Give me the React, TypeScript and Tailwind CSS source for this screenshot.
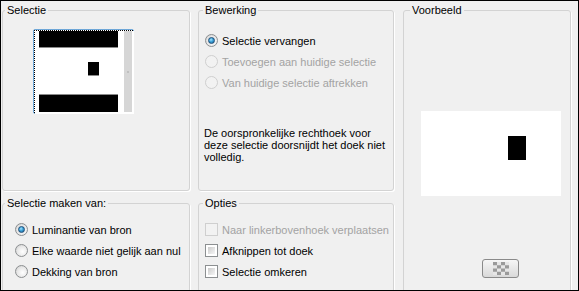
import React from 'react';

const font = "font-['Liberation_Sans',Arial,sans-serif] text-[11px] leading-[12px]";

function Radio({ checked, disabled }: { checked?: boolean; disabled?: boolean }) {
  return (
    <span
      className={
        'relative flex h-[13px] w-[13px] shrink-0 items-center justify-center rounded-full border ' +
        (disabled
          ? 'border-[#cfcfcf] bg-[#f2f2f2]'
          : 'border-[#8c8f91] bg-[radial-gradient(circle_at_60%_60%,#ffffff_0%,#e8e8e8_55%,#c4c4c4_100%)]')
      }
    >
      {checked && (
        <span className="h-[7px] w-[7px] rounded-full border border-[#1f4e78] bg-[radial-gradient(circle_at_40%_35%,#a6e3ff_0%,#3aa1d8_45%,#1b5d8f_100%)]" />
      )}
    </span>
  );
}

function Check({ disabled }: { disabled?: boolean }) {
  return (
    <span
      className={
        'flex h-[13px] w-[13px] shrink-0 items-center justify-center border ' +
        (disabled ? 'border-[#cfcfcf] bg-[#f2f2f2]' : 'border-[#8c8f91] bg-white p-[2px]')
      }
    >
      {!disabled && <span className="h-full w-full bg-gradient-to-br from-[#cbcbcb] to-[#f6f6f6]" />}
    </span>
  );
}

function Group({
  title,
  offset,
  className,
  children,
}: {
  title: string;
  offset: string;
  className: string;
  children: React.ReactNode;
}) {
  return (
    <fieldset
      className={'rounded-[3px] border border-[#d3d3d3] shadow-[1px_1px_0_#ffffff] ' + className}
    >
      <legend className={'px-[2px] leading-[12px] text-black ' + offset}>{title}</legend>
      {children}
    </fieldset>
  );
}

function Thumb() {
  return (
    <div className="ml-[30px] mt-[13px] h-[85px] w-[101px] rounded-[2px] border border-[#6ea7d8] p-0">
      <div className="h-full w-full border border-dotted border-black bg-white">
        <svg width="99" height="83" viewBox="0 0 99 83">
          <rect x="0" y="0" width="99" height="83" fill="#ffffff" />
          <rect x="4" y="0" width="79" height="16" fill="#000000" />
          <rect x="4" y="16" width="79" height="1" fill="#8a8a8a" />
          <rect x="53" y="31" width="11" height="13" fill="#000000" />
          <rect x="53" y="44" width="11" height="1" fill="#8a8a8a" />
          <rect x="4" y="63" width="79" height="1" fill="#8a8a8a" />
          <rect x="4" y="64" width="79" height="17" fill="#000000" />
          <rect x="89" y="0" width="8" height="81" fill="#d6d6d6" />
          <rect x="92" y="40" width="2" height="2" fill="#c0c0c0" />
        </svg>
      </div>
    </div>
  );
}

function Checker() {
  const cells = [];
  for (let r = 0; r < 4; r++) {
    for (let c = 0; c < 4; c++) {
      if ((r + c) % 2 === 0) cells.push(<rect key={r + '-' + c} x={c * 4} y={r * 3.25} width="4" height="3.25" fill="#9a9a9a" />);
    }
  }
  return (
    <svg width="16" height="13" viewBox="0 0 16 13">
      <rect width="16" height="13" fill="#e6e6e6" />
      {cells}
    </svg>
  );
}

export default function App() {
  return (
    <div className={'h-[291px] w-[579px] overflow-hidden border border-black bg-[#f0f0f0] text-black ' + font}>
      <div className="flex pt-[3px]">
        {/* left column */}
        <div className="ml-[1px] flex w-[188px] flex-col">
          <Group title="Selectie" offset="ml-[2px]" className="h-[187px]">
            <Thumb />
          </Group>
          <Group title="Selectie maken van:" offset="ml-[2px]" className="mt-[6px] h-[120px]">
            <div className="ml-[12px] mt-[10px] flex flex-col">
              <label className="flex h-[21px] items-center gap-[4px]">
                <Radio checked />
                <span>Luminantie van bron</span>
              </label>
              <label className="flex h-[21px] items-center gap-[4px]">
                <Radio />
                <span>Elke waarde niet gelijk aan nul</span>
              </label>
              <label className="flex h-[21px] items-center gap-[4px]">
                <Radio />
                <span>Dekking van bron</span>
              </label>
            </div>
          </Group>
        </div>

        {/* middle column */}
        <div className="ml-[8px] flex w-[196px] flex-col">
          <Group title="Bewerking" offset="ml-[4px]" className="h-[187px]">
            <div className="ml-[6px] mt-[14px] flex flex-col">
              <label className="flex h-[21px] items-center gap-[4px]">
                <Radio checked />
                <span>Selectie vervangen</span>
              </label>
              <label className="flex h-[21px] items-center gap-[4px] text-[#a3a3a3]">
                <Radio disabled />
                <span>Toevoegen aan huidige selectie</span>
              </label>
              <label className="flex h-[21px] items-center gap-[4px] text-[#a3a3a3]">
                <Radio disabled />
                <span>Van huidige selectie aftrekken</span>
              </label>
            </div>
            <p className="ml-[5px] mt-[34px] w-[186px]">
              De oorspronkelijke rechthoek voor deze selectie doorsnijdt het doek niet volledig.
            </p>
          </Group>
          <Group title="Opties" offset="ml-[4px]" className="mt-[6px] h-[120px]">
            <div className="ml-[6px] mt-[10px] flex flex-col">
              <label className="flex h-[21px] items-center gap-[4px] text-[#a3a3a3]">
                <Check disabled />
                <span>Naar linkerbovenhoek verplaatsen</span>
              </label>
              <label className="flex h-[21px] items-center gap-[4px]">
                <Check />
                <span>Afknippen tot doek</span>
              </label>
              <label className="flex h-[21px] items-center gap-[4px]">
                <Check />
                <span>Selectie omkeren</span>
              </label>
            </div>
          </Group>
        </div>

        {/* right column */}
        <div className="ml-[9px] flex w-[168px] flex-col">
          <Group title="Voorbeeld" offset="ml-[6px]" className="h-[300px]">
            <div className="ml-[17px] mt-[95px] flex h-[85px] w-[140px] items-start bg-white">
              <div className="ml-[87px] mt-[25px] h-[24px] w-[18px] bg-black" />
            </div>
            <button className="ml-[78px] mt-[63px] flex h-[19px] w-[37px] items-center justify-center rounded-[3px] border border-[#8a8a8a] bg-gradient-to-b from-[#f6f6f6] to-[#d9d9d9]">
              <Checker />
            </button>
          </Group>
        </div>
      </div>
    </div>
  );
}
